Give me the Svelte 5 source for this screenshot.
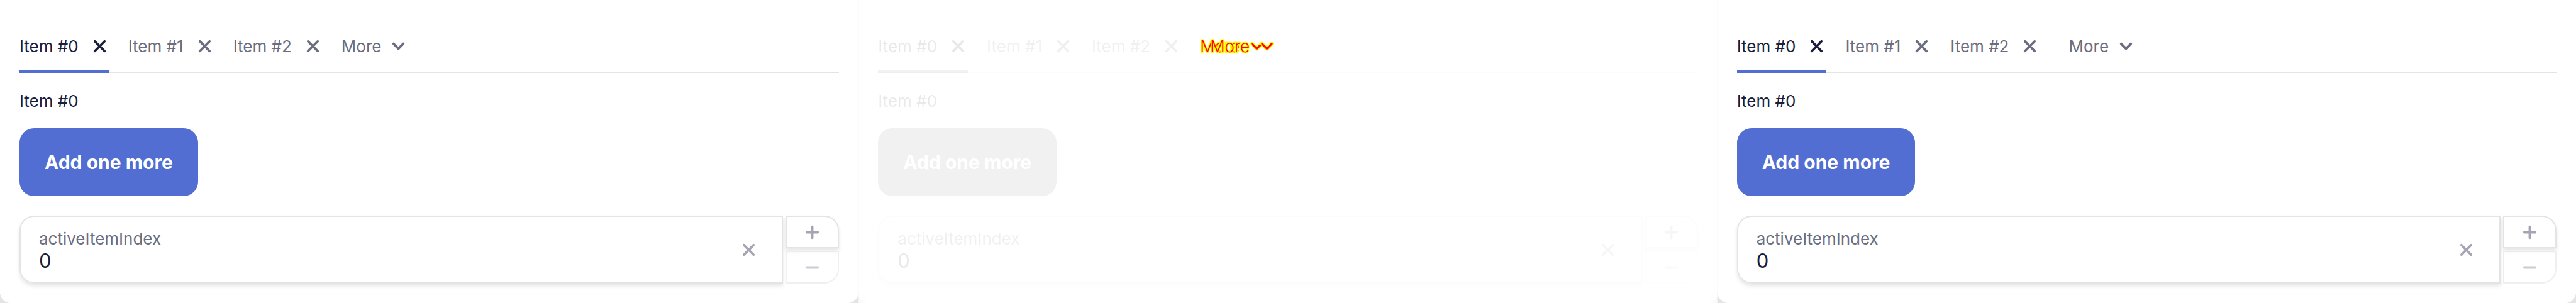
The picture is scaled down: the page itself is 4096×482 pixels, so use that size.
<script>
  const tabs = ['Item #0', 'Item #1', 'Item #2'];
  const panels = [
    { id: 'before', kind: 'plain' },
    { id: 'diff', kind: 'faded' },
    { id: 'after', kind: 'shifted' },
  ];
</script>

{#snippet cross()}
  <svg class="icon" viewBox="0 0 32 32" aria-hidden="true"><path d="M8 8L24 24M24 8L8 24" /></svg>
{/snippet}

{#snippet chevron()}
  <svg class="icon" viewBox="0 0 32 32" aria-hidden="true">
    <path class="halo" d="M8 12L16 20L24 12" />
    <path class="line" d="M8 12L16 20L24 12" />
  </svg>
{/snippet}

<main>
  {#each panels as panel (panel.id)}
    <section class="panel {panel.kind}">
      <nav>
        {#each tabs as tab, i}
          <div class="tab mute" class:active={i === 0}>
            <button class="name">{tab}</button>
            <button class="close" aria-label="Close {tab}">{@render cross()}</button>
          </div>
        {/each}
        <button class="more">
          <span>More</span>
          {@render chevron()}
          {#if panel.kind === 'faded'}
            <span class="ghost" aria-hidden="true"><span>More</span>{@render chevron()}</span>
          {/if}
        </button>
      </nav>
      <div class="content mute">
        <p>Item #0</p>
        <button class="add">Add one more</button>
        <div class="number">
          <div class="field">
            <div class="texts">
              <label for="index-{panel.id}">activeItemIndex</label>
              <input id="index-{panel.id}" type="text" inputmode="numeric" value="0" />
            </div>
            <button class="clear" aria-label="Clear">{@render cross()}</button>
          </div>
          <div class="steps">
            <button aria-label="Increase">
              <svg class="icon" viewBox="0 0 32 32" aria-hidden="true"><path d="M16 7V25M7 16H25" /></svg>
            </button>
            <button aria-label="Decrease" disabled>
              <svg class="icon" viewBox="0 0 32 32" aria-hidden="true"><path d="M7 16H25" /></svg>
            </button>
          </div>
        </div>
      </div>
    </section>
  {/each}
</main>

<style>
  :global(body) {
    background: #e4e4e4;
  }
  main {
    display: grid;
    grid-template-columns: repeat(3, 1fr);
    font-family: Inter, sans-serif;
    font-size: 26px;
    line-height: 39px;
    color: #1b1f3b;
  }
  button,
  input {
    margin: 0;
    padding: 0;
    border: 0;
    background: none;
    font: inherit;
    color: inherit;
  }
  .panel {
    box-sizing: border-box;
    min-width: 0;
    padding: 31px;
    background: #fff;
    border-radius: 0 0 17px 17px;
  }
  .faded {
    box-shadow: 0 0 0 17px #fbfbfb;
    clip-path: inset(0);
  }
  .faded .mute {
    filter: grayscale(1) opacity(0.1);
  }
  nav {
    display: flex;
    gap: 30px;
    height: 85px;
    box-shadow: inset 0 -2px #e4e4e4;
  }
  .faded nav {
    box-shadow: inset 0 -2px #fcfcfc;
  }
  .tab,
  .more {
    display: flex;
    align-items: center;
    gap: 18px;
    color: #6b6d80;
  }
  .tab.active {
    color: #1b1f3b;
    box-shadow: inset 0 -4px #526ed3;
  }
  .close,
  .clear {
    display: flex;
  }
  .icon {
    display: block;
    width: 31px;
    height: 31px;
    fill: none;
    stroke: currentColor;
    stroke-width: 4;
    stroke-linecap: round;
    stroke-linejoin: round;
  }
  .halo {
    stroke: none;
  }
  .more,
  .ghost {
    gap: 12px;
  }
  .shifted .more {
    margin-left: 16px;
  }
  .faded .more {
    position: relative;
    color: #f00;
    font-weight: 300;
    -webkit-text-stroke: 3px #ff0;
    paint-order: stroke fill;
  }
  .faded .halo {
    stroke: #ff0;
    stroke-width: 6;
  }
  .faded .line {
    stroke-width: 3;
  }
  .ghost {
    position: absolute;
    inset: 0 -16px 0 16px;
    display: flex;
    align-items: center;
  }
  p {
    margin: 25px 0 24px;
  }
  .add {
    display: block;
    height: 108px;
    padding: 0 40px;
    border-radius: 23px;
    background: #526ed3;
    color: #fff;
    font-size: 30px;
    font-weight: 700;
  }
  .number {
    display: flex;
    gap: 4px;
    height: 108px;
    margin-top: 31px;
  }
  .field {
    box-sizing: border-box;
    flex: 1;
    min-width: 0;
    display: flex;
    align-items: center;
    padding: 0 37px 0 29px;
    border: 2px solid #e4e4e4;
    border-radius: 23px 0 0 23px;
    box-shadow: 0 4px 6px rgba(0, 0, 0, 0.1);
  }
  .texts {
    flex: 1;
    min-width: 0;
    display: flex;
    flex-direction: column;
  }
  label {
    line-height: 35px;
    color: #6b6d80;
  }
  input {
    width: 100%;
    height: 35px;
    font-size: 31px;
    outline: none;
  }
  .clear,
  .steps {
    color: #a4a5b1;
  }
  .steps {
    display: grid;
    grid-template-rows: 1fr 1fr;
    gap: 4px;
    width: 85px;
  }
  .steps button {
    display: flex;
    align-items: center;
    justify-content: center;
    border: 2px solid #e4e4e4;
    border-radius: 0 23px 0 0;
    box-shadow: 0 4px 6px rgba(0, 0, 0, 0.1);
  }
  .steps button:disabled {
    border-radius: 0 0 23px 0;
    box-shadow: none;
    opacity: 0.56;
  }
</style>
